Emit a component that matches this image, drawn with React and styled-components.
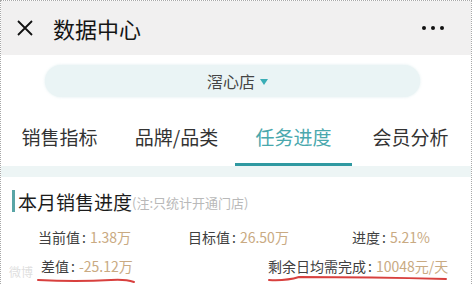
import React from 'react'
import styled, { createGlobalStyle } from 'styled-components'

const Global = createGlobalStyle`
  html, body { margin: 0; padding: 0; background: #fff; }
  body { font-family: "Noto Sans CJK SC", "Noto Sans", sans-serif; }
`

const Frame = styled.div`
  position: relative;
  width: 472px;
  height: 284px;
  box-sizing: border-box;
  border: 1px dotted #a8a8a8;
  border-bottom: none;
  overflow: hidden;
  background: #fff;
`

const Header = styled.div`
  height: 54px;
  background: #f1f0f0;
  display: flex;
  align-items: center;
  padding: 0 27px 0 15px;
`

const Title = styled.div`
  margin-left: 19px;
  font-size: 22px;
  color: #151515;
  flex: 1;
`

const Dots = styled.div`
  display: flex;
  gap: 5px;
  & span {
    width: 4px;
    height: 4px;
    border-radius: 50%;
    background: #111;
  }
`

const Pill = styled.div`
  margin: 10px 51px 0 44px;
  height: 32px;
  border-radius: 16px;
  background: #eaf4f5;
  box-shadow: 0 0 3px rgba(200, 225, 228, 0.6);
  display: flex;
  align-items: center;
  justify-content: center;
  gap: 5px;
  font-size: 16px;
  color: #444;
  padding-left: 10px;
`

const Caret = styled.span`
  width: 0;
  height: 0;
  border-left: 4px solid transparent;
  border-right: 4px solid transparent;
  border-top: 6px solid #3aaeb6;
  margin-top: 2px;
`

const Tabs = styled.div`
  display: grid;
  grid-template-columns: repeat(4, 117px);
`

const Tab = styled.div`
  height: 54px;
  padding-top: 12px;
  display: flex;
  align-items: center;
  justify-content: center;
  font-size: 19px;
  color: ${p => (p.active ? '#4aa8ad' : '#333')};
  border-bottom: 3px solid ${p => (p.active ? '#2f99a1' : 'transparent')};
`

const Band = styled.div`
  height: 11px;
  background: #edf5f5;
`

const Section = styled.div`
  padding: 13px 0 0 11px;
`

const SectionTitle = styled.div`
  display: flex;
  align-items: center;
  height: 22px;
  border-left: 3px solid #59a5a6;
  padding-left: 3px;
  font-size: 19px;
  color: #1c1c1c;
  white-space: nowrap;
`

const Note = styled.span`
  font-size: 13px;
  color: #b9b9b9;
  margin-top: 2px;
`

const Row = styled.div`
  display: grid;
  grid-template-columns: ${p => p.cols};
  padding-left: ${p => p.indent}px;
  margin-top: ${p => p.top}px;
  height: 20px;
  align-items: center;
  font-size: 14px;
  white-space: nowrap;
`

const Label = styled.span`
  color: #404040;
`

const Colon = styled.span`
  color: #404040;
  margin: 0 4px 0 2px;
`

const Value = styled.span`
  color: #c9aa82;
`

const Marks = styled.svg`
  position: absolute;
  left: 0;
  top: 0;
  pointer-events: none;
`

const Watermark = styled.div`
  position: absolute;
  left: 8px;
  top: 262px;
  font-size: 12px;
  color: rgba(190, 190, 190, 0.5);
`

const Item = ({ label, value }) => (
  <span>
    <Label>{label}</Label>
    <Colon>:</Colon>
    <Value>{value}</Value>
  </span>
)

export default function App() {
  return (
    <Frame>
      <Global />
      <Header>
        <svg width="18" height="18" viewBox="0 0 18 18">
          <path d="M2 2 L16 16 M16 2 L2 16" stroke="#111" strokeWidth="1.8" fill="none" />
        </svg>
        <Title>数据中心</Title>
        <Dots>
          <span />
          <span />
          <span />
        </Dots>
      </Header>
      <Pill>
        滘心店
        <Caret />
      </Pill>
      <Tabs>
        <Tab>销售指标</Tab>
        <Tab>品牌/品类</Tab>
        <Tab active>任务进度</Tab>
        <Tab>会员分析</Tab>
      </Tabs>
      <Band />
      <Section>
        <SectionTitle>
          本月销售进度<Note>(注:只统计开通门店)</Note>
        </SectionTitle>
      </Section>
      <Row indent={37} cols="150px 164px auto" top={15}>
        <Item label="当前值" value="1.38万" />
        <Item label="目标值" value="26.50万" />
        <Item label="进度" value="5.21%" />
      </Row>
      <Row indent={40} cols="227px auto" top={9}>
        <Item label="差值" value="-25.12万" />
        <Item label="剩余日均需完成" value="10048元/天" />
      </Row>
      <Watermark>微博</Watermark>
      <Marks width="472" height="284">
        <path
          d="M37 279 Q 75 281 110 279 Q 124 278 133 281"
          stroke="#d8403e"
          strokeWidth="2"
          fill="none"
          strokeLinecap="round"
        />
        <path
          d="M268 279 Q 285 280 298 276 Q 370 276 445 278"
          stroke="#d8403e"
          strokeWidth="2"
          fill="none"
          strokeLinecap="round"
        />
      </Marks>
    </Frame>
  )
}
